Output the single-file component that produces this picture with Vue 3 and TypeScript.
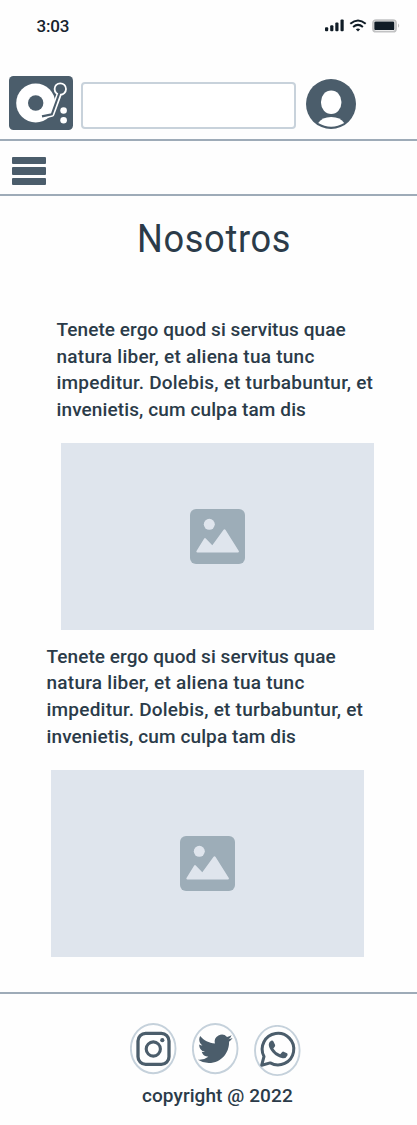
<script setup lang="ts">
interface Section {
  id: string
  lines: string[]
}

const lines: string[] = [
  'Tenete ergo quod si servitus quae',
  'natura liber, et aliena tua tunc',
  'impeditur. Dolebis, et turbabuntur, et',
  'invenietis, cum culpa tam dis',
]

const sections: Section[] = [
  { id: 'first', lines },
  { id: 'second', lines },
]
</script>

<template>
  <div class="page">
    <div class="status">
      <span class="time">3:03</span>
      <svg class="signals" width="78" height="16" viewBox="0 0 78 16">
        <g fill="#101c26">
          <rect x="1" y="8.3" width="3.2" height="4" rx="1" />
          <rect x="6.2" y="6.2" width="3.2" height="6.1" rx="1" />
          <rect x="11.3" y="3.5" width="3.2" height="8.8" rx="1" />
          <rect x="16.5" y="0.6" width="3.2" height="11.7" rx="1" />
          <path d="M31.8 10.3 Q34 8.6 36.2 10.3 L34 12.5Z" />
          <rect x="50.3" y="2.5" width="20" height="8.6" rx="1.2" />
        </g>
        <g fill="none" stroke="#101c26" stroke-width="2">
          <path d="M26.3 4.8 Q34 -1.8 41.7 4.8" />
          <path d="M29.1 7.9 Q34 3.8 38.9 7.9" />
        </g>
        <rect x="49" y="1.1" width="23" height="11.6" rx="3" fill="none" stroke="#c1c2c3" stroke-width="1.8" />
        <path d="M74 4.5 Q76.4 6.7 74 8.8Z" fill="#c1c2c3" />
      </svg>
    </div>

    <header class="header">
      <svg class="logo" width="64" height="54" viewBox="0 0 64 54">
        <rect width="64" height="54" rx="4.5" fill="#4b5d6b" />
        <circle cx="26.7" cy="27" r="19.5" fill="#fff" />
        <circle cx="26.7" cy="27" r="7.7" fill="#4b5d6b" />
        <path d="M33.5 40.4 L42.8 38.3 L50.6 17" fill="none" stroke="#fff" stroke-width="5.2" stroke-linejoin="round" />
        <circle cx="51.3" cy="13" r="5.7" fill="#4b5d6b" stroke="#fff" stroke-width="1.8" />
        <path d="M33 40.4 L42.8 38.3 L50.4 17" fill="none" stroke="#4b5d6b" stroke-width="2.1" />
        <circle cx="54.6" cy="34.5" r="3.3" fill="#fff" />
        <circle cx="54.6" cy="44.2" r="3.3" fill="#fff" />
      </svg>
      <input class="search" type="text" aria-label="Buscar" />
      <svg class="avatar" width="50" height="50" viewBox="0 0 50 50">
        <circle cx="25" cy="25" r="25" fill="#4b5d6b" />
        <rect x="15" y="11.5" width="20.4" height="23.5" rx="10.2" ry="11.2" fill="#fff" />
        <path d="M12.2 44 Q16 38 25.2 38 Q34.5 38 38.2 44 Q32 47.7 25.2 47.7 Q18.3 47.7 12.2 44Z" fill="#fff" />
      </svg>
    </header>

    <nav class="nav">
      <button class="menu" aria-label="Menu"><i /><i /><i /></button>
    </nav>

    <main>
      <h1>Nosotros</h1>
      <section v-for="section in sections" :key="section.id" :class="['block', section.id]">
        <p>
          <span v-for="(line, i) in section.lines" :key="i" :class="['line', `l${i + 1}`]">{{ line }}</span>
        </p>
        <div class="photo">
          <svg width="55" height="55" viewBox="0 0 55 55">
            <rect width="55" height="55" rx="6" fill="#9dadb8" />
            <circle cx="19.3" cy="15.3" r="5.5" fill="#dfe5ed" />
            <path d="M6.5 42 L14.2 29.5 Q15 28.3 15.8 29.5 L22.3 36.3 L33.4 21 Q34.5 19.4 35.6 21 L48.8 42 Q49.4 43.4 48 43.4 H7.3 Q5.8 43.4 6.5 42Z" fill="#dfe5ed" />
          </svg>
        </div>
      </section>
    </main>

    <footer class="footer">
      <div class="social">
        <a aria-label="Instagram">
          <svg width="47" height="52" viewBox="0 0 47 52">
            <ellipse cx="23.2" cy="25.6" rx="22.3" ry="24.6" class="ring" />
            <g fill="none" stroke="#4b5d6b">
              <rect x="8" y="10.4" width="31" height="31" rx="7.6" stroke-width="3.3" />
              <circle cx="23.3" cy="26" r="7.1" stroke-width="3.1" />
            </g>
            <circle cx="32.3" cy="17.2" r="2.1" fill="#4b5d6b" />
          </svg>
        </a>
        <a aria-label="Twitter">
          <svg width="47" height="52" viewBox="0 0 47 52">
            <ellipse cx="23.2" cy="25.6" rx="22.3" ry="24.6" class="ring" />
            <path transform="translate(5.8 8.4) scale(1.45)" fill="#4b5d6b" d="M23.953 4.57a10 10 0 01-2.825.775 4.958 4.958 0 002.163-2.723c-.951.555-2.005.959-3.127 1.184a4.92 4.92 0 00-8.384 4.482C7.69 8.095 4.067 6.13 1.64 3.162a4.822 4.822 0 00-.666 2.475c0 1.71.87 3.213 2.188 4.096a4.904 4.904 0 01-2.228-.616v.06a4.923 4.923 0 003.946 4.827 4.996 4.996 0 01-2.212.085 4.936 4.936 0 004.604 3.417 9.867 9.867 0 01-6.102 2.105c-.39 0-.779-.023-1.17-.067a13.995 13.995 0 007.557 2.209c9.053 0 13.998-7.496 13.998-13.985 0-.21 0-.42-.015-.63A9.935 9.935 0 0024 4.59z" />
          </svg>
        </a>
        <a class="whatsapp" aria-label="WhatsApp">
          <svg width="47" height="52" viewBox="0 0 47 52">
            <ellipse cx="23.3" cy="25.5" rx="22.3" ry="24.6" class="ring" />
            <path d="M7.7 40.2 L10 31.5 A15.8 15.8 0 1 1 16.2 37.9Z" fill="none" stroke="#4b5d6b" stroke-width="3" stroke-linejoin="round" />
            <path d="M17.2 15.7 Q18.9 15.3 19.6 16.7 L21.1 20.1 Q21.4 20.9 20.5 22 L19.3 23.4 Q21.8 27.7 26.2 29.3 L28.2 27 Q28.8 26.3 29.6 26.7 L33 28.3 Q34 28.8 33.4 30.5 Q32.2 33.5 28.7 33.2 Q23.1 32.5 18.4 27.3 Q14.4 22.7 14.8 19.1 Q15.2 16.5 17.2 15.7Z" fill="#4b5d6b" />
          </svg>
        </a>
      </div>
      <div class="copyright">copyright @ 2022</div>
    </footer>
  </div>
</template>

<style>
body {
  margin: 0;
  background: #fff;
}
</style>

<style scoped>
.page {
  width: 417px;
  height: 1125px;
  overflow: hidden;
  background: #fefefe;
  color: #2b3b49;
  font-family: Roboto, "Liberation Sans", sans-serif;
}
.status {
  box-sizing: border-box;
  display: flex;
  justify-content: space-between;
  height: 76px;
  padding: 16px 15px 0 36.5px;
}
.time {
  font-size: 17px;
  font-weight: 500;
  line-height: 20px;
  letter-spacing: -0.15px;
  color: #17232d;
}
.signals {
  margin-top: 3px;
}
.header {
  box-sizing: border-box;
  display: flex;
  align-items: flex-start;
  height: 64.5px;
  padding-left: 9px;
  border-bottom: 2px solid #9eabb8;
}
.search {
  box-sizing: border-box;
  width: 215px;
  height: 47px;
  margin: 6px 10px 0 8px;
  padding: 0 10px;
  border: 2px solid #c8d2db;
  border-radius: 4px;
  background: #fff;
  outline: none;
}
.avatar {
  margin-top: 3px;
}
.nav {
  box-sizing: border-box;
  height: 55.5px;
  padding: 16px 0 0 12px;
  border-bottom: 2px solid #9eabb8;
}
.menu {
  display: flex;
  flex-direction: column;
  gap: 3.7px;
  padding: 0;
  border: 0;
  background: none;
}
.menu i {
  width: 34px;
  height: 7.2px;
  border-radius: 1px;
  background: #4b5d6b;
}
h1 {
  width: 200px;
  height: 46px;
  margin: 19.5px 0 0 136.5px;
  font-size: 38.5px;
  font-weight: 400;
  line-height: 46px;
  letter-spacing: 0.7px;
  transform: scaleX(0.94);
  transform-origin: left;
}
.block {
  width: 320px;
}
.first {
  margin: 55.5px 0 0 56.5px;
}
.second {
  margin: 14px 0 0 46.5px;
}
p {
  margin: 0;
  font-size: 19px;
  font-weight: 500;
  line-height: 26.6px;
}
.line {
  display: block;
  white-space: nowrap;
}
.l1 {
  letter-spacing: 0.07px;
}
.l2 {
  letter-spacing: 0.25px;
}
.l3 {
  letter-spacing: 0.23px;
}
.l4 {
  letter-spacing: 0.11px;
}
.photo {
  display: flex;
  align-items: center;
  justify-content: center;
  width: 313px;
  height: 186.5px;
  margin: 20px 0 0 4.5px;
  background: #dfe5ed;
}
.footer {
  margin-top: 35.5px;
  border-top: 2px solid #9eabb8;
}
.social {
  display: flex;
  gap: 15px;
  padding: 29px 0 0 130px;
}
.social a {
  height: 52px;
}
.social .whatsapp {
  padding-top: 2px;
}
.ring {
  fill: none;
  stroke: #c5d1db;
  stroke-width: 1.9;
}
.copyright {
  margin: 6px 0 0 142px;
  font-size: 19px;
  font-weight: 500;
  line-height: 26px;
  letter-spacing: 0.08px;
  white-space: nowrap;
}
</style>
